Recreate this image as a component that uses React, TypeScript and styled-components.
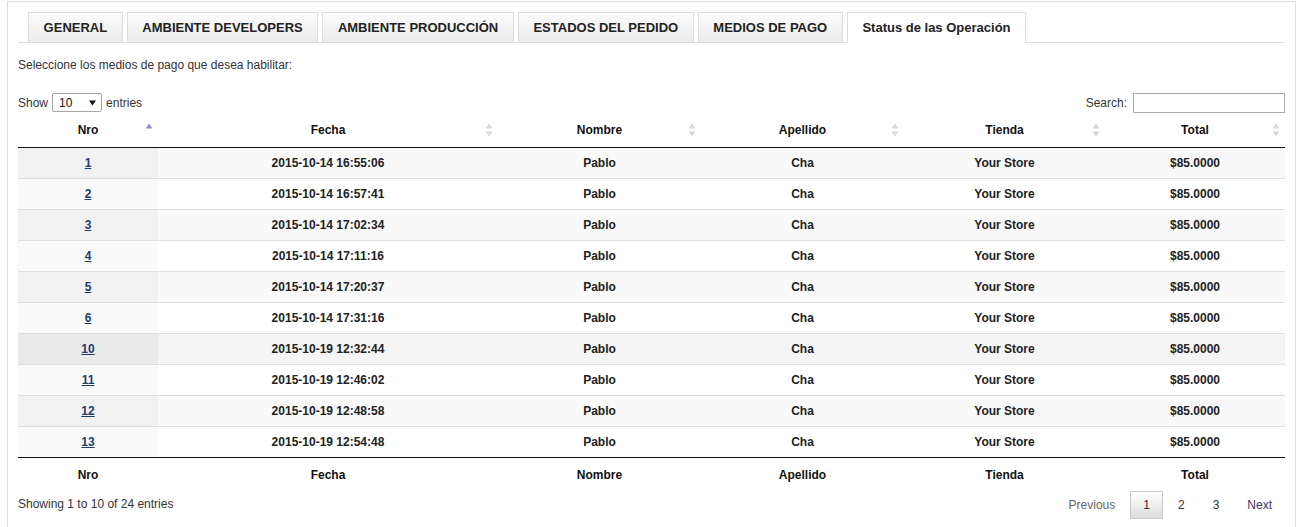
import React from 'react';
import styled, { createGlobalStyle } from 'styled-components';

const GlobalStyle = createGlobalStyle`
  html, body { margin: 0; padding: 0; background: #fff; overflow: hidden; }
  body { font-family: "Liberation Sans", Arial, sans-serif; font-size: 12px; color: #333; }
  * { box-sizing: border-box; }
`;

const Frame = styled.div`
  margin: 1px 0 0 7px;
  width: 1289px;
  height: 526px;
  border: 1px solid #ddd;
  border-bottom: none;
  padding: 10px 10px 0 10px;
  overflow: hidden;
`;

const TabBar = styled.ul`
  display: flex;
  gap: 4px;
  list-style: none;
  margin: 0;
  padding: 0 0 0 10px;
  border-bottom: 1px solid #ddd;
`;

const Tab = styled.li<{ $active?: boolean }>`
  height: 31px;
  margin-bottom: -1px;
  padding: 0 14.6px;
  display: flex;
  align-items: center;
  border: 1px solid #ddd;
  border-bottom: 1px solid ${(p) => (p.$active ? '#fff' : '#ddd')};
  background: ${(p) => (p.$active ? '#fff' : 'linear-gradient(#fbfbfb, #ececec)')};
  font-size: 13px;
  font-weight: bold;
  color: #222;
  white-space: nowrap;
`;

const Intro = styled.p`
  margin: 15px 0 0;
  line-height: 14px;
  color: #333;
`;

const Toolbar = styled.div`
  margin-top: 20px;
  height: 21px;
  display: flex;
  justify-content: space-between;
  align-items: center;
`;

const Field = styled.label`
  display: flex;
  align-items: center;
  gap: 4px;
  color: #333;
`;

const SearchField = styled(Field)`
  gap: 6px;
`;

const FakeSelect = styled.div`
  width: 50px;
  height: 19px;
  border: 1px solid #a6a6a6;
  border-radius: 2px;
  display: flex;
  align-items: center;
  justify-content: space-between;
  padding: 0 5px 0 6px;
  color: #111;
  background: #fff;
`;

const SearchInput = styled.input`
  width: 152px;
  height: 20px;
  border: 1px solid #aaa;
  padding: 0 4px;
  font: inherit;
  outline: none;
`;

const Table = styled.table`
  width: 1267px;
  border-collapse: separate;
  border-spacing: 0;
  table-layout: fixed;
`;

const HeadCell = styled.th`
  position: relative;
  padding: 10px 18px;
  line-height: 14px;
  font-size: 12px;
  font-weight: bold;
  color: #111;
  text-align: center;
  border-bottom: 1px solid #111;
`;

const FootCell = styled.th`
  padding: 10px 18px 6px;
  line-height: 14px;
  font-size: 12px;
  font-weight: bold;
  color: #111;
  text-align: center;
  border-top: 1px solid #111;
`;

const SortIcon = styled.svg`
  position: absolute;
  right: 5px;
  top: 10px;
`;

const Row = styled.tr<{ $odd: boolean; $hover?: boolean }>`
  background: ${(p) => (p.$hover ? '#f5f5f5' : p.$odd ? '#f9f9f9' : '#fff')};
  & > td:first-child {
    background: ${(p) => (p.$hover ? '#eaeaea' : p.$odd ? '#f1f1f1' : '#fafafa')};
  }
  &:not(:first-child) > td {
    border-top: 1px solid #ddd;
  }
`;

const Cell = styled.td`
  padding: 8px 10px;
  line-height: 14px;
  font-size: 12px;
  font-weight: bold;
  color: #222;
  text-align: center;
`;

const IdLink = styled.a`
  color: #1e3d6f;
  text-decoration: underline;
`;

const Bottom = styled.div`
  display: flex;
  justify-content: space-between;
  align-items: flex-start;
`;

const Info = styled.div`
  padding-top: 9px;
  line-height: 14px;
  color: #333;
`;

const Pager = styled.div`
  padding-top: 3px;
  display: flex;
`;

const PageButton = styled.span<{ $current?: boolean; $disabled?: boolean }>`
  margin-left: 2px;
  padding: 6px 12px;
  line-height: 14px;
  border: 1px solid ${(p) => (p.$current ? '#cacaca' : 'transparent')};
  background: ${(p) => (p.$current ? 'linear-gradient(#fff, #dcdcdc)' : 'transparent')};
  color: ${(p) => (p.$disabled ? '#666' : '#333')};
`;

const NextButton = styled(PageButton)`
  color: #3d3566;
`;

const columns = [
  { label: 'Nro', width: 140 },
  { label: 'Fecha', width: 340 },
  { label: 'Nombre', width: 203 },
  { label: 'Apellido', width: 203 },
  { label: 'Tienda', width: 201 },
  { label: 'Total', width: 180 },
];

const rows = [
  ['1', '2015-10-14 16:55:06'],
  ['2', '2015-10-14 16:57:41'],
  ['3', '2015-10-14 17:02:34'],
  ['4', '2015-10-14 17:11:16'],
  ['5', '2015-10-14 17:20:37'],
  ['6', '2015-10-14 17:31:16'],
  ['10', '2015-10-19 12:32:44'],
  ['11', '2015-10-19 12:46:02'],
  ['12', '2015-10-19 12:48:58'],
  ['13', '2015-10-19 12:54:48'],
];

const tabs = [
  'GENERAL',
  'AMBIENTE DEVELOPERS',
  'AMBIENTE PRODUCCIÓN',
  'ESTADOS DEL PEDIDO',
  'MEDIOS DE PAGO',
  'Status de las Operación',
];

function Unsorted() {
  return (
    <SortIcon width="8" height="14" viewBox="0 0 8 14">
      <polygon points="0.5,5.5 4,0.5 7.5,5.5" fill="#d8d8d8" />
      <polygon points="0.5,8.5 4,13.5 7.5,8.5" fill="#d8d8d8" />
    </SortIcon>
  );
}

function SortedAsc() {
  return (
    <SortIcon width="8" height="14" viewBox="0 0 8 14">
      <polygon points="0.5,5.5 4,0.5 7.5,5.5" fill="#8f8fd4" />
    </SortIcon>
  );
}

export default function App() {
  return (
    <>
      <GlobalStyle />
      <Frame>
        <TabBar>
          {tabs.map((t, i) => (
            <Tab key={t} $active={i === tabs.length - 1}>
              {t}
            </Tab>
          ))}
        </TabBar>
        <Intro>Seleccione los medios de pago que desea habilitar:</Intro>
        <Toolbar>
          <Field>
            Show
            <FakeSelect>
              <span>10</span>
              <svg width="7" height="6" viewBox="0 0 7 6">
                <polygon points="0,0.5 7,0.5 3.5,5.5" fill="#111" />
              </svg>
            </FakeSelect>
            entries
          </Field>
          <SearchField>
            Search:
            <SearchInput type="search" />
          </SearchField>
        </Toolbar>
        <Table>
          <colgroup>
            {columns.map((c) => (
              <col key={c.label} style={{ width: c.width }} />
            ))}
          </colgroup>
          <thead>
            <tr>
              {columns.map((c, i) => (
                <HeadCell key={c.label}>
                  {c.label}
                  {i === 0 ? <SortedAsc /> : <Unsorted />}
                </HeadCell>
              ))}
            </tr>
          </thead>
          <tbody>
            {rows.map(([id, date], i) => (
              <Row key={id} $odd={i % 2 === 0} $hover={id === '10'}>
                <Cell>
                  <IdLink href="#">{id}</IdLink>
                </Cell>
                <Cell>{date}</Cell>
                <Cell>Pablo</Cell>
                <Cell>Cha</Cell>
                <Cell>Your Store</Cell>
                <Cell>$85.0000</Cell>
              </Row>
            ))}
          </tbody>
          <tfoot>
            <tr>
              {columns.map((c) => (
                <FootCell key={c.label}>{c.label}</FootCell>
              ))}
            </tr>
          </tfoot>
        </Table>
        <Bottom>
          <Info>Showing 1 to 10 of 24 entries</Info>
          <Pager>
            <PageButton $disabled>Previous</PageButton>
            <PageButton $current>1</PageButton>
            <PageButton>2</PageButton>
            <PageButton>3</PageButton>
            <NextButton>Next</NextButton>
          </Pager>
        </Bottom>
      </Frame>
    </>
  );
}
